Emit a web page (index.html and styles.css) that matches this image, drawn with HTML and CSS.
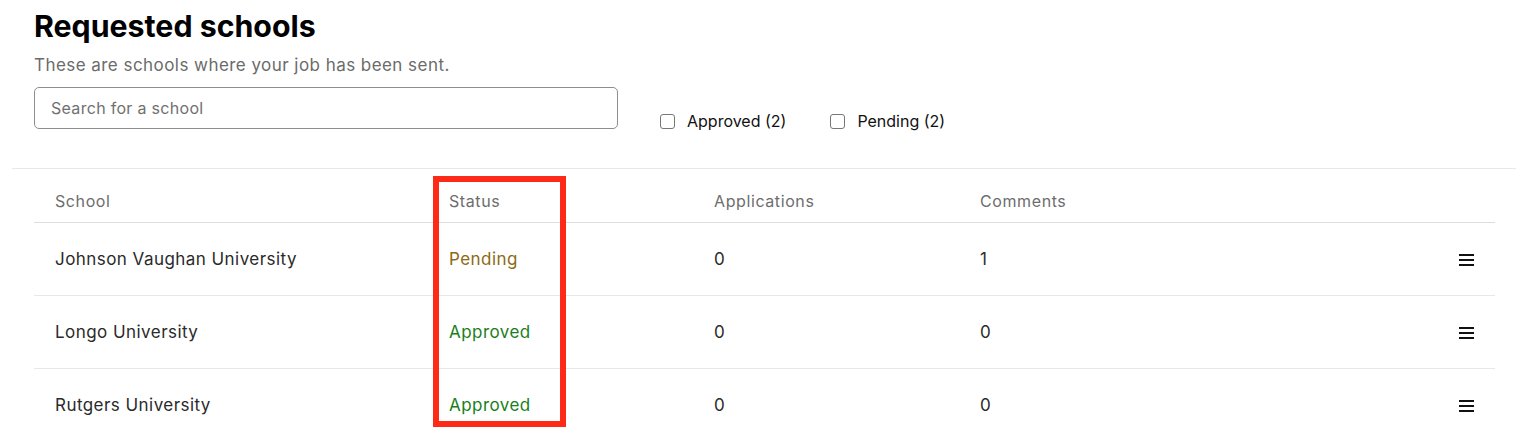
FILE: index.html
```html
<!DOCTYPE html>
<html>
<head>
<meta charset="utf-8">
<link rel="stylesheet" href="styles.css">
</head>
<body>
<div class="page">
  <section class="intro">
    <h1 class="title">Requested schools</h1>
    <p class="subtitle">These are schools where your job has been sent.</p>
    <div class="filters">
      <input class="search" type="text" placeholder="Search for a school">
      <label class="check"><span class="box"></span>Approved (2)</label>
      <label class="check"><span class="box"></span>Pending (2)</label>
    </div>
  </section>
  <div class="divider"></div>
  <section class="table-wrap">
    <table class="schools">
      <colgroup>
        <col class="c-school"><col class="c-status"><col class="c-apps"><col class="c-comments"><col class="c-menu">
      </colgroup>
      <thead>
        <tr><th>School</th><th>Status</th><th>Applications</th><th>Comments</th><th></th></tr>
      </thead>
      <tbody>
        <tr><td>Johnson Vaughan University</td><td class="pending">Pending</td><td>0</td><td>1</td><td class="menu"><span class="burger"><i></i><i></i><i></i></span></td></tr>
        <tr><td>Longo University</td><td class="approved">Approved</td><td>0</td><td>0</td><td class="menu"><span class="burger"><i></i><i></i><i></i></span></td></tr>
        <tr><td>Rutgers University</td><td class="approved">Approved</td><td>0</td><td>0</td><td class="menu"><span class="burger"><i></i><i></i><i></i></span></td></tr>
      </tbody>
    </table>
    <div class="highlight"></div>
  </section>
</div>
</body>
</html>
```

FILE: styles.css
```css
* { box-sizing: border-box; }
html, body { margin: 0; padding: 0; background: #fff; }
body {
  font-family: Inter, "Noto Sans", "Liberation Sans", sans-serif;
  color: #222;
  overflow: hidden;
}
.page {
  width: 1504px;
  margin-left: 12px;
}
.intro {
  padding: 8px 0 0 22px;
}
.title {
  margin: 0;
  font-size: 30.3px;
  font-weight: 700;
  line-height: 36px;
  color: #000;
}
.subtitle {
  margin: 10px 0 0;
  font-size: 17px;
  line-height: 22px;
  color: #6b6b6b;
  letter-spacing: 0.45px;
}
.filters {
  display: flex;
  align-items: flex-end;
  margin-top: 11px;
  height: 42px;
}
.search {
  width: 584px;
  height: 42px;
  border: 1px solid #8e8e8e;
  border-radius: 5px;
  padding: 0 16px;
  font-family: inherit;
  font-size: 16px;
  letter-spacing: 0.3px;
  color: #222;
  outline: none;
}
.search::placeholder { color: #707070; }
.check {
  display: flex;
  align-items: center;
  gap: 12px;
  font-size: 16px;
  color: #111;
  margin-left: 42px;
  height: 16px;
}
.check + .check { margin-left: 44px; }
.box {
  width: 15px;
  height: 15px;
  border: 1px solid #777;
  border-radius: 3px;
  background: #fff;
}
.divider {
  height: 1px;
  background: #e8e8e8;
  margin-top: 39px;
}
.table-wrap {
  position: relative;
  padding: 0 21px 0 22px;
}
.schools {
  width: 1461px;
  border-collapse: collapse;
  table-layout: fixed;
}
.c-school { width: 394px; }
.c-status { width: 265px; }
.c-apps { width: 266px; }
.c-comments { width: 400px; }
.schools th {
  text-align: left;
  font-weight: 400;
  font-size: 16px;
  letter-spacing: 0.6px;
  color: #6d6d6d;
  padding: 0 21px;
  height: 53px;
  vertical-align: bottom;
  padding-bottom: 11px;
  border-bottom: 1px solid #dedede;
}
.schools td {
  font-size: 17px;
  letter-spacing: 0.45px;
  color: #2a2a2a;
  padding: 0 21px;
  height: 73px;
  border-bottom: 1px solid #e8e8e8;
}
.schools td.pending { color: #8c6a14; }
.schools td.approved { color: #1a7f1a; }
.schools td.menu { text-align: right; }
.burger {
  display: inline-flex;
  flex-direction: column;
  gap: 3px;
  width: 15px;
  vertical-align: middle;
}
.burger i {
  display: block;
  height: 2px;
  background: #111;
}
.highlight {
  position: absolute;
  left: 421px;
  top: 7px;
  width: 133px;
  height: 251px;
  border: 6px solid #fd2a18;
  pointer-events: none;
}
```
